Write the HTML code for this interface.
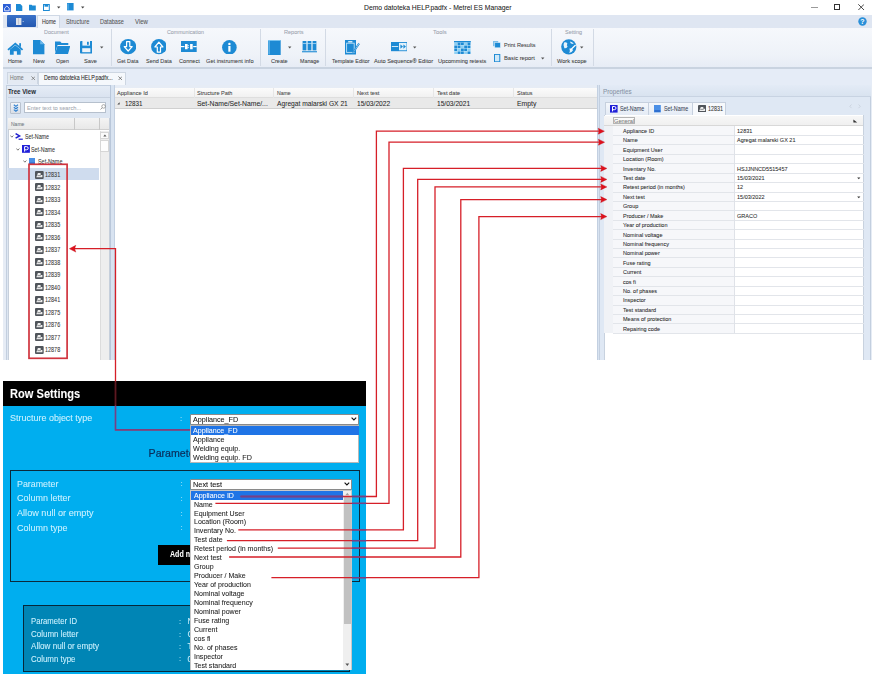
<!DOCTYPE html>
<html><head><meta charset="utf-8"><title>Metrel ES Manager</title>
<style>
html,body{margin:0;padding:0;}
body{width:875px;height:677px;overflow:hidden;position:relative;background:#fff;font-family:"Liberation Sans", sans-serif;}
#wrap{position:absolute;left:0;top:0;width:875px;height:677px;overflow:hidden;filter:blur(0.3px);}
#wrap>div,#wrap>svg,#wrap>span{position:absolute;box-sizing:border-box;}
.t{white-space:pre;transform-origin:0 0;-webkit-text-stroke:0.06px currentColor;}

</style></head><body><div id="wrap">
<div style="left:3.00px;top:14.50px;width:869.00px;height:345.50px;background:#e6ecf5;"></div>
<div style="left:0.00px;top:0.00px;width:875.00px;height:14.50px;background:#fff;"></div>
<svg style="left:3.00px;top:3.50px;" width="8.00" height="8.00" viewBox="0 0 8.00 8.00"><rect x="0" y="0" width="7.8" height="8" fill="#2b5fd6"/><path d="M1.6 4.2 L3.9 2 L6.2 4.2 V6.8 H1.6 Z" fill="none" stroke="#fff" stroke-width="0.8"/></svg>
<svg style="left:15.80px;top:3.80px;" width="7.00" height="7.50" viewBox="0 0 7.00 7.50"><path d="M0 0 H4.3 L6.3 2 V7.2 H0 Z" fill="#1d8ad4"/></svg>
<svg style="left:29.20px;top:3.90px;" width="7.50" height="7.00" viewBox="0 0 7.50 7.00"><path d="M0 0.8 H2.6 L3.3 1.6 H6.8 V6.6 H0 Z" fill="#1d8ad4"/></svg>
<svg style="left:43.00px;top:4.00px;" width="6.80" height="7.00" viewBox="0 0 6.80 7.00"><rect x="0.5" y="0.5" width="5.8" height="6" fill="none" stroke="#1d8ad4" stroke-width="1"/><rect x="1.5" y="0.5" width="3.8" height="2.2" fill="#1d8ad4"/></svg>
<svg style="left:56.50px;top:6.00px;" width="4.00" height="3.00" viewBox="0 0 4.00 3.00"><path d="M0 0.5 H3.4 L1.7 2.4 Z" fill="#444"/></svg>
<svg style="left:67.00px;top:3.40px;" width="7.00" height="7.60" viewBox="0 0 7.00 7.60"><rect x="0" y="0" width="6.6" height="7.4" fill="#1d8ad4"/><rect x="0.6" y="0.6" width="0.8" height="6.2" fill="#7cc3ef"/></svg>
<svg style="left:80.50px;top:6.00px;" width="4.00" height="3.00" viewBox="0 0 4.00 3.00"><path d="M0 0.5 H3.4 L1.7 2.4 Z" fill="#444"/></svg>
<span class="t" style="left:364.00px;top:4.00px;font-size:8.00px;line-height:8.00px;color:#202020;font-weight:400;font-family:'Liberation Sans', sans-serif;transform:scaleX(0.8469);">Demo datoteka HELP.padfx - Metrel ES Manager</span>
<div style="left:811.00px;top:6.60px;width:7.00px;height:0.90px;background:#9a9a9a;"></div>
<div style="left:834.00px;top:4.30px;width:5.80px;height:5.60px;border:0.9px solid #333;"></div>
<svg style="left:857.80px;top:4.00px;" width="6.40" height="6.40" viewBox="0 0 6.40 6.40"><path d="M0.3 0.3 L6.1 6.1 M6.1 0.3 L0.3 6.1" stroke="#333" stroke-width="0.9"/></svg>
<div style="left:3.00px;top:14.50px;width:869.00px;height:13.50px;background:#dfe6f2;"></div>
<div style="left:6.50px;top:15.00px;width:29.50px;height:11.70px;background:linear-gradient(#3a72c9,#2458b0);border-radius:1px;"></div>
<svg style="left:16.00px;top:17.80px;" width="12.00" height="7.50" viewBox="0 0 12.00 7.50"><rect x="0" y="0" width="5.4" height="7" fill="#dfe3ea"/><rect x="2.3" y="0" width="0.5" height="6.5" fill="#aab"/><path d="M6.5 3.5 H8" stroke="#cfd8ea" stroke-width="0.6"/></svg>
<div style="left:36.70px;top:15.20px;width:23.80px;height:13.50px;background:#f3f6fb;border:0.6px solid #cfd8e5;border-bottom:none;"></div>
<span class="t" style="left:41.60px;top:18.00px;font-size:7.00px;line-height:7.00px;color:#333;font-weight:400;font-family:'Liberation Sans', sans-serif;transform:scaleX(0.7498);">Home</span>
<span class="t" style="left:66.00px;top:18.00px;font-size:7.00px;line-height:7.00px;color:#555;font-weight:400;font-family:'Liberation Sans', sans-serif;transform:scaleX(0.8239);">Structure</span>
<span class="t" style="left:100.10px;top:18.00px;font-size:7.00px;line-height:7.00px;color:#555;font-weight:400;font-family:'Liberation Sans', sans-serif;transform:scaleX(0.7942);">Database</span>
<span class="t" style="left:134.80px;top:18.00px;font-size:7.00px;line-height:7.00px;color:#555;font-weight:400;font-family:'Liberation Sans', sans-serif;transform:scaleX(0.8573);">View</span>
<svg style="left:857.50px;top:16.80px;" width="9.00" height="9.00" viewBox="0 0 9.00 9.00"><circle cx="4.5" cy="4.5" r="4.2" fill="#2a8fd8"/><text x="4.5" y="7.2" font-size="7" font-weight="700" text-anchor="middle" fill="#fff" font-family="Liberation Sans">?</text></svg>
<div style="left:3.00px;top:28.00px;width:869.00px;height:40.00px;background:linear-gradient(#f6f8fc,#eef2f8 70%,#e6ecf5);"></div>
<div style="left:3.00px;top:67.00px;width:869.00px;height:2.00px;background:#c9d3e0;"></div>
<div style="left:110.50px;top:29.00px;width:0.80px;height:37.00px;background:#d3dae5;"></div>
<div style="left:259.50px;top:29.00px;width:0.80px;height:37.00px;background:#d3dae5;"></div>
<div style="left:325.00px;top:29.00px;width:0.80px;height:37.00px;background:#d3dae5;"></div>
<div style="left:551.20px;top:29.00px;width:0.80px;height:37.00px;background:#d3dae5;"></div>
<div style="left:592.80px;top:29.00px;width:0.80px;height:37.00px;background:#d3dae5;"></div>
<span class="t" style="left:44.10px;top:29.00px;font-size:6.20px;line-height:6.20px;color:#9aa2ae;font-weight:400;font-family:'Liberation Sans', sans-serif;transform:scaleX(0.8776);">Document</span>
<span class="t" style="left:167.00px;top:29.00px;font-size:6.20px;line-height:6.20px;color:#9aa2ae;font-weight:400;font-family:'Liberation Sans', sans-serif;transform:scaleX(0.8567);">Communication</span>
<span class="t" style="left:283.70px;top:29.00px;font-size:6.20px;line-height:6.20px;color:#9aa2ae;font-weight:400;font-family:'Liberation Sans', sans-serif;transform:scaleX(0.8982);">Reports</span>
<span class="t" style="left:432.60px;top:29.00px;font-size:6.20px;line-height:6.20px;color:#9aa2ae;font-weight:400;font-family:'Liberation Sans', sans-serif;transform:scaleX(0.9465);">Tools</span>
<span class="t" style="left:564.70px;top:29.00px;font-size:6.20px;line-height:6.20px;color:#9aa2ae;font-weight:400;font-family:'Liberation Sans', sans-serif;transform:scaleX(0.8859);">Setting</span>
<span class="t" style="left:8.00px;top:59.00px;font-size:5.90px;line-height:5.90px;color:#3c3c3c;font-weight:400;font-family:'Liberation Sans', sans-serif;transform:scaleX(0.9023);">Home</span>
<span class="t" style="left:32.90px;top:59.00px;font-size:5.90px;line-height:5.90px;color:#3c3c3c;font-weight:400;font-family:'Liberation Sans', sans-serif;transform:scaleX(0.9912);">New</span>
<span class="t" style="left:56.00px;top:59.00px;font-size:5.90px;line-height:5.90px;color:#3c3c3c;font-weight:400;font-family:'Liberation Sans', sans-serif;transform:scaleX(0.9007);">Open</span>
<span class="t" style="left:84.40px;top:59.00px;font-size:5.90px;line-height:5.90px;color:#3c3c3c;font-weight:400;font-family:'Liberation Sans', sans-serif;transform:scaleX(0.9667);">Save</span>
<span class="t" style="left:117.00px;top:59.00px;font-size:5.90px;line-height:5.90px;color:#3c3c3c;font-weight:400;font-family:'Liberation Sans', sans-serif;transform:scaleX(0.9063);">Get Data</span>
<span class="t" style="left:145.60px;top:59.00px;font-size:5.90px;line-height:5.90px;color:#3c3c3c;font-weight:400;font-family:'Liberation Sans', sans-serif;transform:scaleX(0.9289);">Send Data</span>
<span class="t" style="left:178.60px;top:59.00px;font-size:5.90px;line-height:5.90px;color:#3c3c3c;font-weight:400;font-family:'Liberation Sans', sans-serif;transform:scaleX(0.9465);">Connect</span>
<span class="t" style="left:205.80px;top:59.00px;font-size:5.90px;line-height:5.90px;color:#3c3c3c;font-weight:400;font-family:'Liberation Sans', sans-serif;transform:scaleX(0.9550);">Get instrument info</span>
<span class="t" style="left:270.90px;top:59.00px;font-size:5.90px;line-height:5.90px;color:#3c3c3c;font-weight:400;font-family:'Liberation Sans', sans-serif;transform:scaleX(0.9430);">Create</span>
<span class="t" style="left:299.70px;top:59.00px;font-size:5.90px;line-height:5.90px;color:#3c3c3c;font-weight:400;font-family:'Liberation Sans', sans-serif;transform:scaleX(0.9052);">Manage</span>
<span class="t" style="left:331.70px;top:59.00px;font-size:5.90px;line-height:5.90px;color:#3c3c3c;font-weight:400;font-family:'Liberation Sans', sans-serif;transform:scaleX(0.9148);">Template Editor</span>
<span class="t" style="left:374.00px;top:59.00px;font-size:5.90px;line-height:5.90px;color:#3c3c3c;font-weight:400;font-family:'Liberation Sans', sans-serif;transform:scaleX(0.9587);">Auto Sequence® Editor</span>
<span class="t" style="left:437.90px;top:59.00px;font-size:5.90px;line-height:5.90px;color:#3c3c3c;font-weight:400;font-family:'Liberation Sans', sans-serif;transform:scaleX(0.9523);">Upcomming retests</span>
<span class="t" style="left:503.70px;top:43.00px;font-size:5.90px;line-height:5.90px;color:#3c3c3c;font-weight:400;font-family:'Liberation Sans', sans-serif;transform:scaleX(0.9419);">Print Results</span>
<span class="t" style="left:503.70px;top:56.00px;font-size:5.90px;line-height:5.90px;color:#3c3c3c;font-weight:400;font-family:'Liberation Sans', sans-serif;transform:scaleX(0.9784);">Basic report</span>
<span class="t" style="left:557.40px;top:59.00px;font-size:5.90px;line-height:5.90px;color:#3c3c3c;font-weight:400;font-family:'Liberation Sans', sans-serif;transform:scaleX(0.9568);">Work scope</span>
<svg style="left:7.00px;top:41.50px;" width="17.00" height="13.50" viewBox="0 0 17.00 13.50"><path d="M8.3 0.6 L0.4 7.3 L1.6 8.4 L8.3 2.8 L15 8.4 L16.2 7.3 Z" fill="#1d8ad4"/><rect x="12.2" y="1.2" width="1.8" height="3.6" fill="#1d8ad4"/><path d="M2.9 7.6 L8.3 3.2 L13.7 7.6 V12.8 H9.9 V9.3 H6.7 V12.8 H2.9 Z" fill="#1d8ad4"/></svg>
<svg style="left:33.30px;top:40.00px;" width="11.50" height="14.50" viewBox="0 0 11.50 14.50"><path d="M0 0 H7.2 L11.4 4.3 V14.3 H0 Z" fill="#1d8ad4"/><path d="M7.2 0 V4.3 H11.4" fill="#6db8ea"/></svg>
<svg style="left:54.70px;top:40.60px;" width="15.50" height="13.20" viewBox="0 0 15.50 13.20"><path d="M0 0.6 H5.2 L6.6 2 H13.3 V4 H2.6 L0 12 Z" fill="#1d8ad4"/><path d="M2.4 4.9 H15.3 L13 13 H0 Z" fill="#1d8ad4"/></svg>
<svg style="left:79.60px;top:41.10px;" width="12.60" height="12.80" viewBox="0 0 12.60 12.80"><rect x="0" y="0" width="12.5" height="12.6" rx="1" fill="#1d8ad4"/><rect x="2.4" y="0" width="7.6" height="4.6" fill="#eef3f9"/><rect x="7" y="0.8" width="1.8" height="3" fill="#1d8ad4"/><rect x="2.2" y="7.2" width="8.2" height="4" fill="#eef3f9"/></svg>
<svg style="left:99.50px;top:46.00px;" width="4.00" height="3.00" viewBox="0 0 4.00 3.00"><path d="M0 0.4 H3.4 L1.7 2.4 Z" fill="#555"/></svg>
<svg style="left:119.50px;top:39.40px;" width="16.40" height="15.40" viewBox="0 0 16.40 15.40"><ellipse cx="8.2" cy="7.7" rx="8.1" ry="7.6" fill="#1d8ad4"/><path d="M6.6 2.6 H9.8 V7.6 H12.2 L8.2 12 L4.2 7.6 H6.6 Z" fill="none" stroke="#fff" stroke-width="1.2" stroke-linejoin="round"/></svg>
<svg style="left:150.60px;top:39.40px;" width="15.80" height="15.40" viewBox="0 0 15.80 15.40"><ellipse cx="7.9" cy="7.7" rx="7.8" ry="7.6" fill="#1d8ad4"/><path d="M6.3 13.2 V8 H3.9 L7.9 3.2 L11.9 8 H9.5 V13.2 Z" fill="none" stroke="#fff" stroke-width="1.2" stroke-linejoin="round"/></svg>
<svg style="left:181.10px;top:41.20px;" width="15.80" height="11.20" viewBox="0 0 15.80 11.20"><rect x="0" y="0" width="15.7" height="11.1" fill="#1d8ad4"/><rect x="0" y="5" width="3.5" height="1.2" fill="#fff"/><rect x="12.2" y="5" width="3.5" height="1.2" fill="#fff"/><path d="M4 3 H6.6 V8.2 H4 Z M11.7 3 H9.1 V8.2 H11.7 Z" fill="#fff"/><rect x="6.6" y="4.2" width="1.2" height="1" fill="#fff"/><rect x="6.6" y="6.1" width="1.2" height="1" fill="#fff"/></svg>
<svg style="left:222.20px;top:39.70px;" width="14.80" height="14.80" viewBox="0 0 14.80 14.80"><circle cx="7.4" cy="7.4" r="7.3" fill="#1d8ad4"/><circle cx="7.4" cy="3.9" r="1.2" fill="#fff"/><rect x="6.3" y="5.9" width="2.2" height="5.8" fill="#fff"/></svg>
<svg style="left:267.60px;top:39.50px;" width="13.00" height="15.20" viewBox="0 0 13.00 15.20"><rect x="0" y="0" width="12.7" height="15" fill="#1d8ad4"/><rect x="0.6" y="0.6" width="0.9" height="13.8" fill="#8fd0f5"/><rect x="0" y="0" width="12.7" height="0.8" fill="#8fd0f5"/></svg>
<svg style="left:288.20px;top:46.00px;" width="4.00" height="3.00" viewBox="0 0 4.00 3.00"><path d="M0 0.4 H3.4 L1.7 2.4 Z" fill="#555"/></svg>
<svg style="left:301.80px;top:41.30px;" width="15.20" height="11.50" viewBox="0 0 15.20 11.50"><rect x="0.6" y="0" width="3.8" height="9.4" fill="#1d8ad4"/><rect x="5.6" y="0" width="3.8" height="9.4" fill="#1d8ad4"/><rect x="10.6" y="0" width="3.8" height="9.4" fill="#1d8ad4"/><rect x="0.6" y="2" width="13.8" height="0.7" fill="#bfe3f8"/><rect x="0" y="10.2" width="15" height="1.1" fill="#1d8ad4"/></svg>
<svg style="left:344.80px;top:39.80px;" width="14.80" height="14.80" viewBox="0 0 14.80 14.80"><rect x="0" y="0" width="11" height="14.5" fill="#1d8ad4"/><rect x="3.2" y="1.2" width="4.2" height="1.2" fill="#fff"/><rect x="1.6" y="3.2" width="7.6" height="9.2" fill="none" stroke="#bfe2f7" stroke-width="0.9"/><path d="M14.4 4 L8.6 12.8 L7.6 13.8 L7.8 12.4 L13.4 3.4 Z" fill="#fff" stroke="#1d8ad4" stroke-width="0.9"/></svg>
<svg style="left:390.90px;top:42.20px;" width="16.60" height="9.40" viewBox="0 0 16.60 9.40"><rect x="0" y="0" width="16.4" height="9.2" fill="#1d8ad4"/><rect x="8" y="0.9" width="7.6" height="7.4" fill="#e3f2fb"/><path d="M9.4 2.4 L12 4.6 L9.4 6.8 Z M12.4 2.4 L15 4.6 L12.4 6.8 Z" fill="#1d8ad4"/><rect x="0.8" y="4.1" width="6.4" height="0.9" fill="#e3f2fb"/></svg>
<svg style="left:412.80px;top:46.00px;" width="4.00" height="3.00" viewBox="0 0 4.00 3.00"><path d="M0 0.4 H3.4 L1.7 2.4 Z" fill="#555"/></svg>
<svg style="left:453.60px;top:40.90px;" width="17.00" height="13.50" viewBox="0 0 17.00 13.50"><rect x="0" y="0" width="16.8" height="13.3" fill="#d3ecfa"/><rect x="0" y="0" width="16.8" height="1.4" fill="#1d8ad4"/><rect x="0.30" y="1.60" width="2.9" height="2.5" fill="#8ccff3"/><rect x="3.60" y="1.60" width="2.9" height="2.5" fill="#1d8ad4"/><rect x="6.90" y="1.60" width="2.9" height="2.5" fill="#1d8ad4"/><rect x="10.20" y="1.60" width="2.9" height="2.5" fill="#8ccff3"/><rect x="13.50" y="1.60" width="2.9" height="2.5" fill="#1d8ad4"/><rect x="0.30" y="4.55" width="2.9" height="2.5" fill="#1d8ad4"/><rect x="3.60" y="4.55" width="2.9" height="2.5" fill="#1d8ad4"/><rect x="6.90" y="4.55" width="2.9" height="2.5" fill="#8ccff3"/><rect x="10.20" y="4.55" width="2.9" height="2.5" fill="#1d8ad4"/><rect x="13.50" y="4.55" width="2.9" height="2.5" fill="#1d8ad4"/><rect x="0.30" y="7.50" width="2.9" height="2.5" fill="#1d8ad4"/><rect x="3.60" y="7.50" width="2.9" height="2.5" fill="#8ccff3"/><rect x="6.90" y="7.50" width="2.9" height="2.5" fill="#1d8ad4"/><rect x="10.20" y="7.50" width="2.9" height="2.5" fill="#1d8ad4"/><rect x="13.50" y="7.50" width="2.9" height="2.5" fill="#8ccff3"/><rect x="0.30" y="10.45" width="2.9" height="2.5" fill="#8ccff3"/><rect x="3.60" y="10.45" width="2.9" height="2.5" fill="#1d8ad4"/><rect x="6.90" y="10.45" width="2.9" height="2.5" fill="#1d8ad4"/><rect x="10.20" y="10.45" width="2.9" height="2.5" fill="#8ccff3"/><rect x="13.50" y="10.45" width="2.9" height="2.5" fill="#1d8ad4"/></svg>
<svg style="left:493.00px;top:40.80px;" width="8.00" height="7.00" viewBox="0 0 8.00 7.00"><rect x="0" y="0" width="5.2" height="5.2" fill="#7cbde8"/><rect x="1.8" y="1.6" width="5.6" height="5.2" fill="#1d8ad4" stroke="#e9f3fb" stroke-width="0.5"/></svg>
<svg style="left:493.90px;top:53.60px;" width="7.00" height="8.40" viewBox="0 0 7.00 8.40"><rect x="0" y="0" width="6.3" height="8.2" fill="#1d8ad4"/><rect x="1" y="0.9" width="4.3" height="6.4" fill="#cfe8f8"/></svg>
<svg style="left:540.60px;top:57.00px;" width="4.00" height="3.00" viewBox="0 0 4.00 3.00"><path d="M0 0.4 H3.4 L1.7 2.4 Z" fill="#555"/></svg>
<svg style="left:560.80px;top:39.20px;" width="16.00" height="16.00" viewBox="0 0 16.00 16.00"><circle cx="7.8" cy="7.8" r="7.6" fill="#1d8ad4"/><path d="M3 3.6 Q5 2.4 6.4 4.4 Q5.2 6.4 6.6 7.4 Q5.4 9.6 3.4 9.2 Q1.8 6.4 3 3.6 Z M9 2.4 Q11.6 2.6 12.8 5 Q10.6 5 9.6 4.2 Z M8.4 9.6 Q10.8 8.8 12.2 11 Q10.8 13.8 8.2 14 Q9.4 11.8 8.4 9.6 Z" fill="#e6f4fc"/><path d="M9.4 11 L14.6 6" stroke="#fff" stroke-width="1.2"/></svg>
<svg style="left:579.60px;top:46.00px;" width="4.00" height="3.00" viewBox="0 0 4.00 3.00"><path d="M0 0.4 H3.4 L1.7 2.4 Z" fill="#555"/></svg>
<div style="left:3.00px;top:69.00px;width:869.00px;height:16.00px;background:#e5ecf7;"></div>
<div style="left:6.80px;top:72.30px;width:31.60px;height:12.20px;background:#e4eaf3;border:0.7px solid #cdd6e2;border-bottom:none;"></div>
<span class="t" style="left:10.40px;top:75.00px;font-size:6.70px;line-height:6.70px;color:#777;font-weight:400;font-family:'Liberation Sans', sans-serif;transform:scaleX(0.7610);">Home</span>
<svg style="left:30.60px;top:75.90px;" width="4.60" height="4.60" viewBox="0 0 4.60 4.60"><path d="M0.4 0.4 L4.2 4.2 M4.2 0.4 L0.4 4.2" stroke="#666" stroke-width="0.7"/></svg>
<div style="left:38.40px;top:71.80px;width:87.20px;height:13.00px;background:#f5f8fc;border:0.7px solid #cdd6e2;border-bottom:none;"></div>
<span class="t" style="left:44.00px;top:75.00px;font-size:6.70px;line-height:6.70px;color:#1a1a1a;font-weight:400;font-family:'Liberation Sans', sans-serif;transform:scaleX(0.7838);">Demo datoteka HELP.padfx...</span>
<svg style="left:117.80px;top:75.90px;" width="4.60" height="4.60" viewBox="0 0 4.60 4.60"><path d="M0.4 0.4 L4.2 4.2 M4.2 0.4 L0.4 4.2" stroke="#555" stroke-width="0.7"/></svg>
<div style="left:5.60px;top:84.80px;width:109.00px;height:275.00px;background:#dde6f2;border:0.8px solid #c3cfdf;border-bottom:none;"></div>
<div style="left:6.50px;top:85.60px;width:107.40px;height:11.50px;background:linear-gradient(#e5ecf6,#dae3f0);"></div>
<span class="t" style="left:8.40px;top:89.00px;font-size:6.30px;line-height:6.30px;color:#2a2f38;font-weight:700;font-family:'Liberation Sans', sans-serif;transform:scaleX(0.9636);">Tree View</span>
<div style="left:8.00px;top:97.00px;width:102.00px;height:0.70px;background:#c8d2e0;"></div>
<div style="left:10.30px;top:102.40px;width:11.00px;height:11.20px;background:linear-gradient(#f2f4f7,#d9dee6);border:0.7px solid #b9c2cf;border-radius:1px;"></div>
<svg style="left:12.80px;top:104.30px;" width="6.00" height="8.00" viewBox="0 0 6.00 8.00"><path d="M0.8 0.8 L2.9 2.4 L5 0.8 M0.8 3.2 L2.9 4.8 L5 3.2 M0.8 5.6 L2.9 7.2 L5 5.6" stroke="#2d7fd0" stroke-width="1.1" fill="none"/></svg>
<div style="left:24.40px;top:102.40px;width:82.00px;height:10.60px;background:#fff;border:0.7px solid #b6c0cd;"></div>
<span class="t" style="left:26.70px;top:105.00px;font-size:6.20px;line-height:6.20px;color:#a4a9b2;font-weight:400;font-family:'Liberation Sans', sans-serif;transform:scaleX(0.9215);">Enter text to search...</span>
<svg style="left:99.60px;top:104.40px;" width="6.00" height="6.00" viewBox="0 0 6.00 6.00"><circle cx="3.6" cy="2.4" r="1.8" fill="none" stroke="#888" stroke-width="0.7"/><path d="M2.3 3.7 L0.5 5.5" stroke="#888" stroke-width="0.8"/></svg>
<div style="left:7.50px;top:117.50px;width:102.50px;height:242.50px;background:#fff;border:0.7px solid #c6cfdb;border-bottom:none;"></div>
<div style="left:8.20px;top:118.20px;width:101.10px;height:12.00px;background:linear-gradient(#f4f4f4,#e8e8e8);border-bottom:0.7px solid #cfcfcf;"></div>
<div style="left:73.60px;top:118.40px;width:0.70px;height:11.80px;background:#c8c8c8;"></div>
<div style="left:99.40px;top:118.40px;width:0.70px;height:11.80px;background:#c8c8c8;"></div>
<span class="t" style="left:10.70px;top:121.00px;font-size:6.20px;line-height:6.20px;color:#6f7680;font-weight:400;font-family:'Liberation Sans', sans-serif;transform:scaleX(0.8102);">Name</span>
<div style="left:99.60px;top:130.60px;width:9.80px;height:229.00px;background:#eeeeee;border-left:0.5px solid #dcdcdc;"></div>
<div style="left:100.40px;top:131.60px;width:8.20px;height:7.60px;background:#fbfbfb;border:0.6px solid #d6d6d6;"></div>
<svg style="left:102.60px;top:133.60px;" width="4.00" height="3.00" viewBox="0 0 4.00 3.00"><path d="M0.3 2.4 H3.5 L1.9 0.6 Z" fill="#555"/></svg>
<div style="left:100.40px;top:139.60px;width:8.20px;height:12.00px;background:#fdfdfd;border:0.6px solid #d6d6d6;"></div>
<div style="left:8.20px;top:168.00px;width:91.20px;height:12.20px;background:#cfdcee;"></div>
<svg style="left:9.80px;top:135.40px;" width="4.00" height="3.00" viewBox="0 0 4.00 3.00"><path d="M0.4 0.5 L1.9 2.2 L3.4 0.5" stroke="#444" stroke-width="0.7" fill="none"/></svg>
<svg style="left:15.00px;top:133.40px;" width="8.00" height="7.00" viewBox="0 0 8.00 7.00"><path d="M0.6 0.6 L4.6 2.9 L0.6 5.2" stroke="#1f1fcf" stroke-width="1.5" fill="none"/><rect x="3.6" y="5.6" width="4.2" height="1.2" fill="#1f1fcf"/></svg>
<span class="t" style="left:24.90px;top:134.00px;font-size:6.50px;line-height:6.50px;color:#333;font-weight:400;font-family:'Liberation Sans', sans-serif;transform:scaleX(0.8202);">Set-Name</span>
<svg style="left:16.40px;top:148.00px;" width="4.00" height="3.00" viewBox="0 0 4.00 3.00"><path d="M0.4 0.5 L1.9 2.2 L3.4 0.5" stroke="#444" stroke-width="0.7" fill="none"/></svg>
<svg style="left:21.90px;top:145.00px;" width="8.00" height="8.00" viewBox="0 0 8.00 8.00"><rect x="0" y="0" width="7.9" height="7.8" fill="#2020d8"/><path d="M2.6 6.6 V1.6 H4.6 Q6.2 1.6 6.2 3.2 Q6.2 4.8 4.6 4.8 H3" stroke="#fff" stroke-width="1" fill="none"/></svg>
<span class="t" style="left:31.40px;top:147.00px;font-size:6.50px;line-height:6.50px;color:#333;font-weight:400;font-family:'Liberation Sans', sans-serif;transform:scaleX(0.8202);">Set-Name</span>
<svg style="left:23.30px;top:160.30px;" width="4.00" height="3.00" viewBox="0 0 4.00 3.00"><path d="M0.4 0.5 L1.9 2.2 L3.4 0.5" stroke="#444" stroke-width="0.7" fill="none"/></svg>
<svg style="left:28.60px;top:157.60px;" width="6.60" height="7.00" viewBox="0 0 6.60 7.00"><rect x="0" y="0" width="6.4" height="6.6" fill="#4a8fe6"/><rect x="0.4" y="4.4" width="5.6" height="2" fill="#2f6fcf"/></svg>
<span class="t" style="left:37.50px;top:159.00px;font-size:6.50px;line-height:6.50px;color:#333;font-weight:400;font-family:'Liberation Sans', sans-serif;transform:scaleX(0.8339);">Set-Name</span>
<svg style="left:35.10px;top:170.70px;" width="8.80" height="8.00" viewBox="0 0 8.80 8.00"><rect x="0" y="0" width="8.7" height="8.0" rx="1.1" fill="#50555b"/><path d="M1.3 6.3 L2.2 3.9 L2.9 2.1 H5.6 V4.0 H7.4 V6.3 Z" fill="#eeeeee"/><path d="M2.4 4.6 H5.9" stroke="#50555b" stroke-width="0.6"/></svg>
<span class="t" style="left:45.00px;top:172.00px;font-size:6.80px;line-height:6.80px;color:#333;font-weight:400;font-family:'Liberation Sans', sans-serif;transform:scaleX(0.8038);">12831</span>
<svg style="left:35.10px;top:183.22px;" width="8.80" height="8.00" viewBox="0 0 8.80 8.00"><rect x="0" y="0" width="8.7" height="8.0" rx="1.1" fill="#50555b"/><path d="M1.3 6.3 L2.2 3.9 L2.9 2.1 H5.6 V4.0 H7.4 V6.3 Z" fill="#eeeeee"/><path d="M2.4 4.6 H5.9" stroke="#50555b" stroke-width="0.6"/></svg>
<span class="t" style="left:45.00px;top:185.00px;font-size:6.80px;line-height:6.80px;color:#333;font-weight:400;font-family:'Liberation Sans', sans-serif;transform:scaleX(0.8038);">12832</span>
<svg style="left:35.10px;top:195.74px;" width="8.80" height="8.00" viewBox="0 0 8.80 8.00"><rect x="0" y="0" width="8.7" height="8.0" rx="1.1" fill="#50555b"/><path d="M1.3 6.3 L2.2 3.9 L2.9 2.1 H5.6 V4.0 H7.4 V6.3 Z" fill="#eeeeee"/><path d="M2.4 4.6 H5.9" stroke="#50555b" stroke-width="0.6"/></svg>
<span class="t" style="left:45.00px;top:197.00px;font-size:6.80px;line-height:6.80px;color:#333;font-weight:400;font-family:'Liberation Sans', sans-serif;transform:scaleX(0.8038);">12833</span>
<svg style="left:35.10px;top:208.26px;" width="8.80" height="8.00" viewBox="0 0 8.80 8.00"><rect x="0" y="0" width="8.7" height="8.0" rx="1.1" fill="#50555b"/><path d="M1.3 6.3 L2.2 3.9 L2.9 2.1 H5.6 V4.0 H7.4 V6.3 Z" fill="#eeeeee"/><path d="M2.4 4.6 H5.9" stroke="#50555b" stroke-width="0.6"/></svg>
<span class="t" style="left:45.00px;top:210.00px;font-size:6.80px;line-height:6.80px;color:#333;font-weight:400;font-family:'Liberation Sans', sans-serif;transform:scaleX(0.8038);">12834</span>
<svg style="left:35.10px;top:220.78px;" width="8.80" height="8.00" viewBox="0 0 8.80 8.00"><rect x="0" y="0" width="8.7" height="8.0" rx="1.1" fill="#50555b"/><path d="M1.3 6.3 L2.2 3.9 L2.9 2.1 H5.6 V4.0 H7.4 V6.3 Z" fill="#eeeeee"/><path d="M2.4 4.6 H5.9" stroke="#50555b" stroke-width="0.6"/></svg>
<span class="t" style="left:45.00px;top:222.00px;font-size:6.80px;line-height:6.80px;color:#333;font-weight:400;font-family:'Liberation Sans', sans-serif;transform:scaleX(0.8038);">12835</span>
<svg style="left:35.10px;top:233.30px;" width="8.80" height="8.00" viewBox="0 0 8.80 8.00"><rect x="0" y="0" width="8.7" height="8.0" rx="1.1" fill="#50555b"/><path d="M1.3 6.3 L2.2 3.9 L2.9 2.1 H5.6 V4.0 H7.4 V6.3 Z" fill="#eeeeee"/><path d="M2.4 4.6 H5.9" stroke="#50555b" stroke-width="0.6"/></svg>
<span class="t" style="left:45.00px;top:235.00px;font-size:6.80px;line-height:6.80px;color:#333;font-weight:400;font-family:'Liberation Sans', sans-serif;transform:scaleX(0.8038);">12836</span>
<svg style="left:35.10px;top:245.82px;" width="8.80" height="8.00" viewBox="0 0 8.80 8.00"><rect x="0" y="0" width="8.7" height="8.0" rx="1.1" fill="#50555b"/><path d="M1.3 6.3 L2.2 3.9 L2.9 2.1 H5.6 V4.0 H7.4 V6.3 Z" fill="#eeeeee"/><path d="M2.4 4.6 H5.9" stroke="#50555b" stroke-width="0.6"/></svg>
<span class="t" style="left:45.00px;top:247.00px;font-size:6.80px;line-height:6.80px;color:#333;font-weight:400;font-family:'Liberation Sans', sans-serif;transform:scaleX(0.8038);">12837</span>
<svg style="left:35.10px;top:258.34px;" width="8.80" height="8.00" viewBox="0 0 8.80 8.00"><rect x="0" y="0" width="8.7" height="8.0" rx="1.1" fill="#50555b"/><path d="M1.3 6.3 L2.2 3.9 L2.9 2.1 H5.6 V4.0 H7.4 V6.3 Z" fill="#eeeeee"/><path d="M2.4 4.6 H5.9" stroke="#50555b" stroke-width="0.6"/></svg>
<span class="t" style="left:45.00px;top:260.00px;font-size:6.80px;line-height:6.80px;color:#333;font-weight:400;font-family:'Liberation Sans', sans-serif;transform:scaleX(0.8038);">12838</span>
<svg style="left:35.10px;top:270.86px;" width="8.80" height="8.00" viewBox="0 0 8.80 8.00"><rect x="0" y="0" width="8.7" height="8.0" rx="1.1" fill="#50555b"/><path d="M1.3 6.3 L2.2 3.9 L2.9 2.1 H5.6 V4.0 H7.4 V6.3 Z" fill="#eeeeee"/><path d="M2.4 4.6 H5.9" stroke="#50555b" stroke-width="0.6"/></svg>
<span class="t" style="left:45.00px;top:272.00px;font-size:6.80px;line-height:6.80px;color:#333;font-weight:400;font-family:'Liberation Sans', sans-serif;transform:scaleX(0.8038);">12839</span>
<svg style="left:35.10px;top:283.38px;" width="8.80" height="8.00" viewBox="0 0 8.80 8.00"><rect x="0" y="0" width="8.7" height="8.0" rx="1.1" fill="#50555b"/><path d="M1.3 6.3 L2.2 3.9 L2.9 2.1 H5.6 V4.0 H7.4 V6.3 Z" fill="#eeeeee"/><path d="M2.4 4.6 H5.9" stroke="#50555b" stroke-width="0.6"/></svg>
<span class="t" style="left:45.00px;top:285.00px;font-size:6.80px;line-height:6.80px;color:#333;font-weight:400;font-family:'Liberation Sans', sans-serif;transform:scaleX(0.8038);">12840</span>
<svg style="left:35.10px;top:295.90px;" width="8.80" height="8.00" viewBox="0 0 8.80 8.00"><rect x="0" y="0" width="8.7" height="8.0" rx="1.1" fill="#50555b"/><path d="M1.3 6.3 L2.2 3.9 L2.9 2.1 H5.6 V4.0 H7.4 V6.3 Z" fill="#eeeeee"/><path d="M2.4 4.6 H5.9" stroke="#50555b" stroke-width="0.6"/></svg>
<span class="t" style="left:45.00px;top:297.00px;font-size:6.80px;line-height:6.80px;color:#333;font-weight:400;font-family:'Liberation Sans', sans-serif;transform:scaleX(0.8038);">12841</span>
<svg style="left:35.10px;top:308.42px;" width="8.80" height="8.00" viewBox="0 0 8.80 8.00"><rect x="0" y="0" width="8.7" height="8.0" rx="1.1" fill="#50555b"/><path d="M1.3 6.3 L2.2 3.9 L2.9 2.1 H5.6 V4.0 H7.4 V6.3 Z" fill="#eeeeee"/><path d="M2.4 4.6 H5.9" stroke="#50555b" stroke-width="0.6"/></svg>
<span class="t" style="left:45.00px;top:310.00px;font-size:6.80px;line-height:6.80px;color:#333;font-weight:400;font-family:'Liberation Sans', sans-serif;transform:scaleX(0.8038);">12875</span>
<svg style="left:35.10px;top:320.94px;" width="8.80" height="8.00" viewBox="0 0 8.80 8.00"><rect x="0" y="0" width="8.7" height="8.0" rx="1.1" fill="#50555b"/><path d="M1.3 6.3 L2.2 3.9 L2.9 2.1 H5.6 V4.0 H7.4 V6.3 Z" fill="#eeeeee"/><path d="M2.4 4.6 H5.9" stroke="#50555b" stroke-width="0.6"/></svg>
<span class="t" style="left:45.00px;top:322.00px;font-size:6.80px;line-height:6.80px;color:#333;font-weight:400;font-family:'Liberation Sans', sans-serif;transform:scaleX(0.8038);">12876</span>
<svg style="left:35.10px;top:333.46px;" width="8.80" height="8.00" viewBox="0 0 8.80 8.00"><rect x="0" y="0" width="8.7" height="8.0" rx="1.1" fill="#50555b"/><path d="M1.3 6.3 L2.2 3.9 L2.9 2.1 H5.6 V4.0 H7.4 V6.3 Z" fill="#eeeeee"/><path d="M2.4 4.6 H5.9" stroke="#50555b" stroke-width="0.6"/></svg>
<span class="t" style="left:45.00px;top:335.00px;font-size:6.80px;line-height:6.80px;color:#333;font-weight:400;font-family:'Liberation Sans', sans-serif;transform:scaleX(0.8038);">12877</span>
<svg style="left:35.10px;top:345.98px;" width="8.80" height="8.00" viewBox="0 0 8.80 8.00"><rect x="0" y="0" width="8.7" height="8.0" rx="1.1" fill="#50555b"/><path d="M1.3 6.3 L2.2 3.9 L2.9 2.1 H5.6 V4.0 H7.4 V6.3 Z" fill="#eeeeee"/><path d="M2.4 4.6 H5.9" stroke="#50555b" stroke-width="0.6"/></svg>
<span class="t" style="left:45.00px;top:347.00px;font-size:6.80px;line-height:6.80px;color:#333;font-weight:400;font-family:'Liberation Sans', sans-serif;transform:scaleX(0.8038);">12878</span>
<div style="left:109.60px;top:85.00px;width:5.20px;height:275.00px;background:#d8e3f1;border-left:0.7px solid #b9c7da;border-right:0.7px solid #c3d0e1;"></div>
<div style="left:114.60px;top:87.60px;width:482.40px;height:273.40px;background:#fff;"></div>
<div style="left:114.60px;top:87.60px;width:482.40px;height:10.00px;background:linear-gradient(#fbfbfb,#f1f1f1);border-bottom:0.6px solid #dedede;"></div>
<div style="left:114.60px;top:97.60px;width:482.40px;height:11.00px;background:#e9e9e9;border-bottom:0.7px solid #d0d0d0;"></div>
<div style="left:194.30px;top:88.00px;width:0.60px;height:9.60px;background:#e6e6e6;"></div>
<div style="left:273.40px;top:88.00px;width:0.60px;height:9.60px;background:#e6e6e6;"></div>
<div style="left:353.40px;top:88.00px;width:0.60px;height:9.60px;background:#e6e6e6;"></div>
<div style="left:433.40px;top:88.00px;width:0.60px;height:9.60px;background:#e6e6e6;"></div>
<div style="left:513.40px;top:88.00px;width:0.60px;height:9.60px;background:#e6e6e6;"></div>
<span class="t" style="left:117.10px;top:91.00px;font-size:5.80px;line-height:5.80px;color:#444;font-weight:400;font-family:'Liberation Sans', sans-serif;transform:scaleX(0.9680);">Appliance Id</span>
<span class="t" style="left:196.90px;top:91.00px;font-size:5.80px;line-height:5.80px;color:#444;font-weight:400;font-family:'Liberation Sans', sans-serif;transform:scaleX(0.9548);">Structure Path</span>
<span class="t" style="left:276.90px;top:91.00px;font-size:5.80px;line-height:5.80px;color:#444;font-weight:400;font-family:'Liberation Sans', sans-serif;transform:scaleX(0.8855);">Name</span>
<span class="t" style="left:356.90px;top:91.00px;font-size:5.80px;line-height:5.80px;color:#444;font-weight:400;font-family:'Liberation Sans', sans-serif;transform:scaleX(0.9787);">Next test</span>
<span class="t" style="left:436.60px;top:91.00px;font-size:5.80px;line-height:5.80px;color:#444;font-weight:400;font-family:'Liberation Sans', sans-serif;transform:scaleX(0.9899);">Test date</span>
<span class="t" style="left:516.60px;top:91.00px;font-size:5.80px;line-height:5.80px;color:#444;font-weight:400;font-family:'Liberation Sans', sans-serif;transform:scaleX(0.9427);">Status</span>
<svg style="left:116.80px;top:102.40px;" width="3.00" height="3.00" viewBox="0 0 3.00 3.00"><path d="M0.3 2.6 L2.6 0.3 L2.6 2.6 Z" fill="#444"/></svg>
<span class="t" style="left:124.90px;top:100.00px;font-size:7.50px;line-height:7.50px;color:#2a2a2a;font-weight:400;font-family:'Liberation Sans', sans-serif;transform:scaleX(0.8343);">12831</span>
<span class="t" style="left:196.90px;top:100.00px;font-size:7.50px;line-height:7.50px;color:#2a2a2a;font-weight:400;font-family:'Liberation Sans', sans-serif;transform:scaleX(0.9084);">Set-Name/Set-Name/...</span>
<span class="t" style="left:276.90px;top:100.00px;font-size:7.50px;line-height:7.50px;color:#2a2a2a;font-weight:400;font-family:'Liberation Sans', sans-serif;transform:scaleX(0.8892);">Agregat malarski GX 21</span>
<span class="t" style="left:356.90px;top:100.00px;font-size:7.50px;line-height:7.50px;color:#2a2a2a;font-weight:400;font-family:'Liberation Sans', sans-serif;transform:scaleX(0.8818);">15/03/2022</span>
<span class="t" style="left:436.60px;top:100.00px;font-size:7.50px;line-height:7.50px;color:#2a2a2a;font-weight:400;font-family:'Liberation Sans', sans-serif;transform:scaleX(0.8818);">15/03/2021</span>
<span class="t" style="left:516.60px;top:100.00px;font-size:7.50px;line-height:7.50px;color:#2a2a2a;font-weight:400;font-family:'Liberation Sans', sans-serif;transform:scaleX(0.9127);">Empty</span>
<div style="left:597.00px;top:85.00px;width:6.50px;height:275.00px;background:#d8e3f1;border-left:0.7px solid #c3d0e1;border-right:0.7px solid #b9c7da;"></div>
<div style="left:599.40px;top:84.60px;width:272.00px;height:275.40px;background:#dfe8f4;border:0.8px solid #c3cfdf;border-bottom:none;"></div>
<div style="left:600.20px;top:85.40px;width:270.40px;height:12.00px;background:linear-gradient(#e3ebf6,#d9e3f0);border-bottom:0.7px solid #c8d3e2;"></div>
<span class="t" style="left:602.90px;top:89.00px;font-size:6.50px;line-height:6.50px;color:#8793a5;font-weight:400;font-family:'Liberation Sans', sans-serif;transform:scaleX(0.9654);">Properties</span>
<div style="left:605.40px;top:102.30px;width:43.80px;height:13.20px;background:linear-gradient(#f4f7fb,#e4ebf5);border:0.7px solid #c6d0de;border-bottom:none;"></div>
<svg style="left:609.60px;top:104.50px;" width="8.00" height="8.00" viewBox="0 0 8.00 8.00"><rect x="0" y="0" width="7.6" height="7.6" fill="#2020d8"/><path d="M2.5 6.4 V1.5 H4.4 Q6 1.5 6 3.1 Q6 4.7 4.4 4.7 H2.9" stroke="#fff" stroke-width="1" fill="none"/></svg>
<span class="t" style="left:620.00px;top:106.00px;font-size:6.40px;line-height:6.40px;color:#3a4456;font-weight:400;font-family:'Liberation Sans', sans-serif;transform:scaleX(0.8400);">Set-Name</span>
<div style="left:649.20px;top:102.30px;width:43.70px;height:13.20px;background:linear-gradient(#f4f7fb,#e4ebf5);border:0.7px solid #c6d0de;border-bottom:none;border-left:none;"></div>
<svg style="left:653.80px;top:104.50px;" width="7.00" height="8.00" viewBox="0 0 7.00 8.00"><rect x="0" y="0" width="6.8" height="7.4" fill="#4a8fe6"/><rect x="0.5" y="5" width="5.8" height="2" fill="#2f6fcf"/></svg>
<span class="t" style="left:664.00px;top:106.00px;font-size:6.40px;line-height:6.40px;color:#3a4456;font-weight:400;font-family:'Liberation Sans', sans-serif;transform:scaleX(0.8400);">Set-Name</span>
<div style="left:692.90px;top:102.30px;width:33.50px;height:13.20px;background:#f7f9fc;border:0.7px solid #c6d0de;border-bottom:none;border-left:none;"></div>
<svg style="left:697.60px;top:104.60px;" width="8.40" height="7.80" viewBox="0 0 8.40 7.80"><rect x="0" y="0" width="8.3" height="7.6" rx="1.1" fill="#50555b"/><path d="M1.2 6.0 L2.1 3.7 L2.8 2.0 H5.3 V3.8 H7.1 V6.0 Z" fill="#eeeeee"/><path d="M2.3 4.4 H5.6" stroke="#50555b" stroke-width="0.6"/></svg>
<span class="t" style="left:708.40px;top:106.00px;font-size:6.40px;line-height:6.40px;color:#333;font-weight:400;font-family:'Liberation Sans', sans-serif;transform:scaleX(0.8428);">12831</span>
<svg style="left:848.50px;top:104.00px;" width="14.00" height="5.00" viewBox="0 0 14.00 5.00"><path d="M2.5 0.5 L0.8 2.3 L2.5 4.1 M9.6 0.5 L11.3 2.3 L9.6 4.1" stroke="#c0c8d4" stroke-width="0.6" fill="none"/></svg>
<div style="left:603.80px;top:115.30px;width:260.00px;height:244.70px;background:#fff;border-left:0.7px solid #c8d2df;border-right:0.7px solid #c8d2df;"></div>
<div style="left:604.40px;top:115.60px;width:259.00px;height:10.60px;background:linear-gradient(#f7f7f7,#f0f0f0);border-bottom:0.7px solid #d8d8d8;"></div>
<div style="left:613.30px;top:117.00px;width:22.00px;height:7.40px;border:0.6px solid #b4b4b4;background:#fbfbfb;"></div>
<span class="t" style="left:614.20px;top:119.00px;font-size:5.80px;line-height:5.80px;color:#777;font-weight:400;font-family:'Liberation Sans', sans-serif;transform:scaleX(0.9789);">General</span>
<svg style="left:852.80px;top:119.20px;" width="5.00" height="4.00" viewBox="0 0 5.00 4.00"><path d="M0.4 0.4 L4.2 3.6 H0.4 Z" fill="#333"/></svg>
<div style="left:604.40px;top:126.20px;width:8.80px;height:207.30px;background:#f0f2f6;"></div>
<div style="left:613.20px;top:126.20px;width:120.60px;height:207.30px;background:#f6f7fa;"></div>
<div style="left:613.20px;top:135.02px;width:250.60px;height:0.60px;background:#e2e5ea;"></div>
<span class="t" style="left:622.70px;top:129.00px;font-size:5.80px;line-height:5.80px;color:#2a2a2a;font-weight:400;font-family:'Liberation Sans', sans-serif;transform:scaleX(0.9500);">Appliance ID</span>
<span class="t" style="left:737.00px;top:129.00px;font-size:5.80px;line-height:5.80px;color:#2a2a2a;font-weight:400;font-family:'Liberation Sans', sans-serif;transform:scaleX(0.9500);">12831</span>
<div style="left:613.20px;top:144.44px;width:250.60px;height:0.60px;background:#e2e5ea;"></div>
<span class="t" style="left:622.70px;top:138.00px;font-size:5.80px;line-height:5.80px;color:#2a2a2a;font-weight:400;font-family:'Liberation Sans', sans-serif;transform:scaleX(0.9500);">Name</span>
<span class="t" style="left:737.00px;top:138.00px;font-size:5.80px;line-height:5.80px;color:#2a2a2a;font-weight:400;font-family:'Liberation Sans', sans-serif;transform:scaleX(0.9500);">Agregat malarski GX 21</span>
<div style="left:613.20px;top:153.86px;width:250.60px;height:0.60px;background:#e2e5ea;"></div>
<span class="t" style="left:622.70px;top:148.00px;font-size:5.80px;line-height:5.80px;color:#2a2a2a;font-weight:400;font-family:'Liberation Sans', sans-serif;transform:scaleX(0.9500);">Equipment User</span>
<div style="left:613.20px;top:163.28px;width:250.60px;height:0.60px;background:#e2e5ea;"></div>
<span class="t" style="left:622.70px;top:157.00px;font-size:5.80px;line-height:5.80px;color:#2a2a2a;font-weight:400;font-family:'Liberation Sans', sans-serif;transform:scaleX(0.9500);">Location (Room)</span>
<div style="left:613.20px;top:172.70px;width:250.60px;height:0.60px;background:#e2e5ea;"></div>
<span class="t" style="left:622.70px;top:167.00px;font-size:5.80px;line-height:5.80px;color:#2a2a2a;font-weight:400;font-family:'Liberation Sans', sans-serif;transform:scaleX(0.9500);">Inventary No.</span>
<span class="t" style="left:737.00px;top:167.00px;font-size:5.80px;line-height:5.80px;color:#2a2a2a;font-weight:400;font-family:'Liberation Sans', sans-serif;transform:scaleX(0.9500);">HSJJNNCD5515457</span>
<div style="left:613.20px;top:182.12px;width:250.60px;height:0.60px;background:#e2e5ea;"></div>
<span class="t" style="left:622.70px;top:176.00px;font-size:5.80px;line-height:5.80px;color:#2a2a2a;font-weight:400;font-family:'Liberation Sans', sans-serif;transform:scaleX(0.9500);">Test date</span>
<span class="t" style="left:737.00px;top:176.00px;font-size:5.80px;line-height:5.80px;color:#2a2a2a;font-weight:400;font-family:'Liberation Sans', sans-serif;transform:scaleX(0.9500);">15/03/2021</span>
<div style="left:613.20px;top:191.54px;width:250.60px;height:0.60px;background:#e2e5ea;"></div>
<span class="t" style="left:622.70px;top:185.00px;font-size:5.80px;line-height:5.80px;color:#2a2a2a;font-weight:400;font-family:'Liberation Sans', sans-serif;transform:scaleX(0.9500);">Retest period (in months)</span>
<span class="t" style="left:737.00px;top:185.00px;font-size:5.80px;line-height:5.80px;color:#2a2a2a;font-weight:400;font-family:'Liberation Sans', sans-serif;transform:scaleX(0.9500);">12</span>
<div style="left:613.20px;top:200.96px;width:250.60px;height:0.60px;background:#e2e5ea;"></div>
<span class="t" style="left:622.70px;top:195.00px;font-size:5.80px;line-height:5.80px;color:#2a2a2a;font-weight:400;font-family:'Liberation Sans', sans-serif;transform:scaleX(0.9500);">Next test</span>
<span class="t" style="left:737.00px;top:195.00px;font-size:5.80px;line-height:5.80px;color:#2a2a2a;font-weight:400;font-family:'Liberation Sans', sans-serif;transform:scaleX(0.9500);">15/03/2022</span>
<div style="left:613.20px;top:210.38px;width:250.60px;height:0.60px;background:#e2e5ea;"></div>
<span class="t" style="left:622.70px;top:204.00px;font-size:5.80px;line-height:5.80px;color:#2a2a2a;font-weight:400;font-family:'Liberation Sans', sans-serif;transform:scaleX(0.9500);">Group</span>
<div style="left:613.20px;top:219.80px;width:250.60px;height:0.60px;background:#e2e5ea;"></div>
<span class="t" style="left:622.70px;top:214.00px;font-size:5.80px;line-height:5.80px;color:#2a2a2a;font-weight:400;font-family:'Liberation Sans', sans-serif;transform:scaleX(0.9500);">Producer / Make</span>
<span class="t" style="left:737.00px;top:214.00px;font-size:5.80px;line-height:5.80px;color:#2a2a2a;font-weight:400;font-family:'Liberation Sans', sans-serif;transform:scaleX(0.9500);">GRACO</span>
<div style="left:613.20px;top:229.22px;width:250.60px;height:0.60px;background:#e2e5ea;"></div>
<span class="t" style="left:622.70px;top:223.00px;font-size:5.80px;line-height:5.80px;color:#2a2a2a;font-weight:400;font-family:'Liberation Sans', sans-serif;transform:scaleX(0.9500);">Year of production</span>
<div style="left:613.20px;top:238.64px;width:250.60px;height:0.60px;background:#e2e5ea;"></div>
<span class="t" style="left:622.70px;top:233.00px;font-size:5.80px;line-height:5.80px;color:#2a2a2a;font-weight:400;font-family:'Liberation Sans', sans-serif;transform:scaleX(0.9500);">Nominal voltage</span>
<div style="left:613.20px;top:248.06px;width:250.60px;height:0.60px;background:#e2e5ea;"></div>
<span class="t" style="left:622.70px;top:242.00px;font-size:5.80px;line-height:5.80px;color:#2a2a2a;font-weight:400;font-family:'Liberation Sans', sans-serif;transform:scaleX(0.9500);">Nominal frequency</span>
<div style="left:613.20px;top:257.48px;width:250.60px;height:0.60px;background:#e2e5ea;"></div>
<span class="t" style="left:622.70px;top:251.00px;font-size:5.80px;line-height:5.80px;color:#2a2a2a;font-weight:400;font-family:'Liberation Sans', sans-serif;transform:scaleX(0.9500);">Nominal power</span>
<div style="left:613.20px;top:266.90px;width:250.60px;height:0.60px;background:#e2e5ea;"></div>
<span class="t" style="left:622.70px;top:261.00px;font-size:5.80px;line-height:5.80px;color:#2a2a2a;font-weight:400;font-family:'Liberation Sans', sans-serif;transform:scaleX(0.9500);">Fuse rating</span>
<div style="left:613.20px;top:276.32px;width:250.60px;height:0.60px;background:#e2e5ea;"></div>
<span class="t" style="left:622.70px;top:270.00px;font-size:5.80px;line-height:5.80px;color:#2a2a2a;font-weight:400;font-family:'Liberation Sans', sans-serif;transform:scaleX(0.9500);">Current</span>
<div style="left:613.20px;top:285.74px;width:250.60px;height:0.60px;background:#e2e5ea;"></div>
<span class="t" style="left:622.70px;top:280.00px;font-size:5.80px;line-height:5.80px;color:#2a2a2a;font-weight:400;font-family:'Liberation Sans', sans-serif;transform:scaleX(0.9500);">cos fi</span>
<div style="left:613.20px;top:295.16px;width:250.60px;height:0.60px;background:#e2e5ea;"></div>
<span class="t" style="left:622.70px;top:289.00px;font-size:5.80px;line-height:5.80px;color:#2a2a2a;font-weight:400;font-family:'Liberation Sans', sans-serif;transform:scaleX(0.9500);">No. of phases</span>
<div style="left:613.20px;top:304.58px;width:250.60px;height:0.60px;background:#e2e5ea;"></div>
<span class="t" style="left:622.70px;top:298.00px;font-size:5.80px;line-height:5.80px;color:#2a2a2a;font-weight:400;font-family:'Liberation Sans', sans-serif;transform:scaleX(0.9500);">Inspector</span>
<div style="left:613.20px;top:314.00px;width:250.60px;height:0.60px;background:#e2e5ea;"></div>
<span class="t" style="left:622.70px;top:308.00px;font-size:5.80px;line-height:5.80px;color:#2a2a2a;font-weight:400;font-family:'Liberation Sans', sans-serif;transform:scaleX(0.9500);">Test standard</span>
<div style="left:613.20px;top:323.42px;width:250.60px;height:0.60px;background:#e2e5ea;"></div>
<span class="t" style="left:622.70px;top:317.00px;font-size:5.80px;line-height:5.80px;color:#2a2a2a;font-weight:400;font-family:'Liberation Sans', sans-serif;transform:scaleX(0.9500);">Means of protection</span>
<div style="left:613.20px;top:332.84px;width:250.60px;height:0.60px;background:#e2e5ea;"></div>
<span class="t" style="left:622.70px;top:327.00px;font-size:5.80px;line-height:5.80px;color:#2a2a2a;font-weight:400;font-family:'Liberation Sans', sans-serif;transform:scaleX(0.9500);">Repairing code</span>
<div style="left:733.60px;top:126.20px;width:0.60px;height:207.30px;background:#dfe2e8;"></div>
<svg style="left:856.80px;top:176.80px;" width="4.00" height="3.00" viewBox="0 0 4.00 3.00"><path d="M0.2 0.4 H3.4 L1.8 2.2 Z" fill="#333"/></svg>
<svg style="left:856.80px;top:195.80px;" width="4.00" height="3.00" viewBox="0 0 4.00 3.00"><path d="M0.2 0.4 H3.4 L1.8 2.2 Z" fill="#333"/></svg>
<div style="left:3.40px;top:381.40px;width:362.90px;height:24.20px;background:#000;"></div>
<span class="t" style="left:10.30px;top:388.00px;font-size:12.30px;line-height:12.30px;color:#fff;font-weight:700;font-family:'Liberation Sans', sans-serif;transform:scaleX(0.9024);">Row Settings</span>
<div style="left:3.40px;top:405.50px;width:362.90px;height:268.20px;background:#00aeef;"></div>
<span class="t" style="left:9.80px;top:414.00px;font-size:9.00px;line-height:9.00px;color:#cdf2ff;font-weight:400;font-family:'Liberation Sans', sans-serif;transform:scaleX(0.9971);">Structure object type</span>
<span class="t" style="left:180.00px;top:415.00px;font-size:8.00px;line-height:8.00px;color:#bfe9fb;font-weight:400;font-family:'Liberation Sans', sans-serif;">:</span>
<span class="t" style="left:148.60px;top:448.00px;font-size:10.60px;line-height:10.60px;color:#0a2d5a;font-weight:400;font-family:'Liberation Sans', sans-serif;transform:scaleX(1.0000);-webkit-text-stroke:0.2px #0a2d5a;">Parameters</span>
<div style="left:10.30px;top:470.30px;width:349.60px;height:112.00px;border:1px solid #0a2a3c;"></div>
<span class="t" style="left:16.80px;top:480.00px;font-size:9.20px;line-height:9.20px;color:#cdf2ff;font-weight:400;font-family:'Liberation Sans', sans-serif;transform:scaleX(0.9639);">Parameter</span>
<span class="t" style="left:180.40px;top:480.00px;font-size:8.00px;line-height:8.00px;color:#bfe9fb;font-weight:400;font-family:'Liberation Sans', sans-serif;">:</span>
<span class="t" style="left:16.80px;top:494.00px;font-size:9.20px;line-height:9.20px;color:#cdf2ff;font-weight:400;font-family:'Liberation Sans', sans-serif;transform:scaleX(0.9779);">Column letter</span>
<span class="t" style="left:180.40px;top:495.00px;font-size:8.00px;line-height:8.00px;color:#bfe9fb;font-weight:400;font-family:'Liberation Sans', sans-serif;">:</span>
<span class="t" style="left:16.80px;top:509.00px;font-size:9.20px;line-height:9.20px;color:#cdf2ff;font-weight:400;font-family:'Liberation Sans', sans-serif;transform:scaleX(0.9921);">Allow null or empty</span>
<span class="t" style="left:180.40px;top:510.00px;font-size:8.00px;line-height:8.00px;color:#bfe9fb;font-weight:400;font-family:'Liberation Sans', sans-serif;">:</span>
<span class="t" style="left:16.80px;top:524.00px;font-size:9.20px;line-height:9.20px;color:#cdf2ff;font-weight:400;font-family:'Liberation Sans', sans-serif;transform:scaleX(0.9778);">Column type</span>
<span class="t" style="left:180.40px;top:524.00px;font-size:8.00px;line-height:8.00px;color:#bfe9fb;font-weight:400;font-family:'Liberation Sans', sans-serif;">:</span>
<div style="left:158.00px;top:545.00px;width:60.00px;height:19.70px;background:#000;"></div>
<span class="t" style="left:170.30px;top:550.00px;font-size:8.40px;line-height:8.40px;color:#fff;font-weight:700;font-family:'Liberation Sans', sans-serif;transform:scaleX(0.8400);">Add new</span>
<div style="left:22.90px;top:605.00px;width:327.50px;height:66.50px;background:#0085b5;border:1px solid #06283a;"></div>
<span class="t" style="left:30.90px;top:617.00px;font-size:8.40px;line-height:8.40px;color:#cdf2ff;font-weight:400;font-family:'Liberation Sans', sans-serif;transform:scaleX(0.9249);">Parameter ID</span>
<span class="t" style="left:179.00px;top:618.00px;font-size:7.50px;line-height:7.50px;color:#bfe9fb;font-weight:400;font-family:'Liberation Sans', sans-serif;">:</span>
<span class="t" style="left:187.40px;top:618.00px;font-size:8.20px;line-height:8.20px;color:#cdf2ff;font-weight:400;font-family:'Liberation Sans', sans-serif;">N</span>
<span class="t" style="left:30.90px;top:630.00px;font-size:8.40px;line-height:8.40px;color:#cdf2ff;font-weight:400;font-family:'Liberation Sans', sans-serif;transform:scaleX(0.9509);">Column letter</span>
<span class="t" style="left:179.00px;top:631.00px;font-size:7.50px;line-height:7.50px;color:#bfe9fb;font-weight:400;font-family:'Liberation Sans', sans-serif;">:</span>
<span class="t" style="left:187.40px;top:631.00px;font-size:8.20px;line-height:8.20px;color:#cdf2ff;font-weight:400;font-family:'Liberation Sans', sans-serif;">C</span>
<span class="t" style="left:30.90px;top:642.00px;font-size:8.40px;line-height:8.40px;color:#cdf2ff;font-weight:400;font-family:'Liberation Sans', sans-serif;transform:scaleX(0.9689);">Allow null or empty</span>
<span class="t" style="left:179.00px;top:643.00px;font-size:7.50px;line-height:7.50px;color:#bfe9fb;font-weight:400;font-family:'Liberation Sans', sans-serif;">:</span>
<span class="t" style="left:187.40px;top:643.00px;font-size:8.20px;line-height:8.20px;color:#cdf2ff;font-weight:400;font-family:'Liberation Sans', sans-serif;">T</span>
<span class="t" style="left:30.90px;top:655.00px;font-size:8.40px;line-height:8.40px;color:#cdf2ff;font-weight:400;font-family:'Liberation Sans', sans-serif;transform:scaleX(0.9458);">Column type</span>
<span class="t" style="left:179.00px;top:655.00px;font-size:7.50px;line-height:7.50px;color:#bfe9fb;font-weight:400;font-family:'Liberation Sans', sans-serif;">:</span>
<span class="t" style="left:187.40px;top:656.00px;font-size:8.20px;line-height:8.20px;color:#cdf2ff;font-weight:400;font-family:'Liberation Sans', sans-serif;">0</span>
<div style="left:190.00px;top:413.70px;width:169.30px;height:11.50px;background:#fff;border:0.8px solid #8a8a8a;border-radius:1px;"></div>
<span class="t" style="left:192.90px;top:416.00px;font-size:7.60px;line-height:7.60px;color:#111;font-weight:400;font-family:'Liberation Sans', sans-serif;transform:scaleX(0.9468);">Appliance_FD</span>
<svg style="left:351.20px;top:417.20px;" width="6.00" height="4.00" viewBox="0 0 6.00 4.00"><path d="M0.6 0.6 L2.9 2.9 L5.2 0.6" stroke="#111" stroke-width="1.1" fill="none"/></svg>
<div style="left:190.00px;top:425.10px;width:169.30px;height:37.90px;background:#fff;border:0.6px solid #b8b8b8;"></div>
<div style="left:190.60px;top:425.60px;width:168.10px;height:9.10px;background:#1f74e6;"></div>
<span class="t" style="left:193.40px;top:427.00px;font-size:7.40px;line-height:7.40px;color:#fff;font-weight:400;font-family:'Liberation Sans', sans-serif;transform:scaleX(0.9595);">Appliance_FD</span>
<span class="t" style="left:193.40px;top:436.00px;font-size:7.40px;line-height:7.40px;color:#1b1b1b;font-weight:400;font-family:'Liberation Sans', sans-serif;transform:scaleX(0.9700);">Appliance</span>
<span class="t" style="left:193.40px;top:445.00px;font-size:7.40px;line-height:7.40px;color:#1b1b1b;font-weight:400;font-family:'Liberation Sans', sans-serif;transform:scaleX(0.9700);">Welding equip.</span>
<span class="t" style="left:193.40px;top:454.00px;font-size:7.40px;line-height:7.40px;color:#1b1b1b;font-weight:400;font-family:'Liberation Sans', sans-serif;transform:scaleX(0.9700);">Welding equip. FD</span>
<div style="left:190.30px;top:478.70px;width:161.60px;height:11.50px;background:#fff;border:0.8px solid #8a8a8a;border-radius:1px;"></div>
<span class="t" style="left:193.30px;top:481.00px;font-size:7.60px;line-height:7.60px;color:#111;font-weight:400;font-family:'Liberation Sans', sans-serif;transform:scaleX(0.9700);">Next test</span>
<svg style="left:344.00px;top:482.40px;" width="6.00" height="4.00" viewBox="0 0 6.00 4.00"><path d="M0.6 0.6 L2.9 2.9 L5.2 0.6" stroke="#111" stroke-width="1.1" fill="none"/></svg>
<div style="left:190.00px;top:490.10px;width:161.80px;height:180.20px;background:#fff;border:0.6px solid #c8c8c8;border-bottom:none;"></div>
<div style="left:190.60px;top:490.50px;width:152.80px;height:9.20px;background:#1f74e6;"></div>
<div style="left:343.40px;top:490.60px;width:8.00px;height:179.20px;background:#efefef;"></div>
<div style="left:343.80px;top:497.40px;width:7.20px;height:126.30px;background:#c1c1c1;"></div>
<svg style="left:345.20px;top:492.00px;" width="5.00" height="4.00" viewBox="0 0 5.00 4.00"><path d="M0.4 3.2 H4.2 L2.3 0.8 Z" fill="#a0a0a0"/></svg>
<svg style="left:345.20px;top:663.20px;" width="5.00" height="4.00" viewBox="0 0 5.00 4.00"><path d="M0.4 0.6 H4.2 L2.3 3 Z" fill="#555"/></svg>
<span class="t" style="left:194.00px;top:492.00px;font-size:7.30px;line-height:7.30px;color:#fff;font-weight:400;font-family:'Liberation Sans', sans-serif;transform:scaleX(0.9650);">Appliance ID</span>
<span class="t" style="left:194.00px;top:501.00px;font-size:7.30px;line-height:7.30px;color:#1b1b1b;font-weight:400;font-family:'Liberation Sans', sans-serif;transform:scaleX(0.9650);">Name</span>
<span class="t" style="left:194.00px;top:510.00px;font-size:7.30px;line-height:7.30px;color:#1b1b1b;font-weight:400;font-family:'Liberation Sans', sans-serif;transform:scaleX(0.9650);">Equipment User</span>
<span class="t" style="left:194.00px;top:518.00px;font-size:7.30px;line-height:7.30px;color:#1b1b1b;font-weight:400;font-family:'Liberation Sans', sans-serif;transform:scaleX(0.9650);">Location (Room)</span>
<span class="t" style="left:194.00px;top:527.00px;font-size:7.30px;line-height:7.30px;color:#1b1b1b;font-weight:400;font-family:'Liberation Sans', sans-serif;transform:scaleX(0.9650);">Inventary No.</span>
<span class="t" style="left:194.00px;top:536.00px;font-size:7.30px;line-height:7.30px;color:#1b1b1b;font-weight:400;font-family:'Liberation Sans', sans-serif;transform:scaleX(0.9650);">Test date</span>
<span class="t" style="left:194.00px;top:545.00px;font-size:7.30px;line-height:7.30px;color:#1b1b1b;font-weight:400;font-family:'Liberation Sans', sans-serif;transform:scaleX(0.9650);">Retest period (in months)</span>
<span class="t" style="left:194.00px;top:554.00px;font-size:7.30px;line-height:7.30px;color:#1b1b1b;font-weight:400;font-family:'Liberation Sans', sans-serif;transform:scaleX(0.9650);">Next test</span>
<span class="t" style="left:194.00px;top:563.00px;font-size:7.30px;line-height:7.30px;color:#1b1b1b;font-weight:400;font-family:'Liberation Sans', sans-serif;transform:scaleX(0.9650);">Group</span>
<span class="t" style="left:194.00px;top:572.00px;font-size:7.30px;line-height:7.30px;color:#1b1b1b;font-weight:400;font-family:'Liberation Sans', sans-serif;transform:scaleX(0.9650);">Producer / Make</span>
<span class="t" style="left:194.00px;top:581.00px;font-size:7.30px;line-height:7.30px;color:#1b1b1b;font-weight:400;font-family:'Liberation Sans', sans-serif;transform:scaleX(0.9650);">Year of production</span>
<span class="t" style="left:194.00px;top:590.00px;font-size:7.30px;line-height:7.30px;color:#1b1b1b;font-weight:400;font-family:'Liberation Sans', sans-serif;transform:scaleX(0.9650);">Nominal voltage</span>
<span class="t" style="left:194.00px;top:599.00px;font-size:7.30px;line-height:7.30px;color:#1b1b1b;font-weight:400;font-family:'Liberation Sans', sans-serif;transform:scaleX(0.9650);">Nominal frequency</span>
<span class="t" style="left:194.00px;top:608.00px;font-size:7.30px;line-height:7.30px;color:#1b1b1b;font-weight:400;font-family:'Liberation Sans', sans-serif;transform:scaleX(0.9650);">Nominal power</span>
<span class="t" style="left:194.00px;top:617.00px;font-size:7.30px;line-height:7.30px;color:#1b1b1b;font-weight:400;font-family:'Liberation Sans', sans-serif;transform:scaleX(0.9650);">Fuse rating</span>
<span class="t" style="left:194.00px;top:626.00px;font-size:7.30px;line-height:7.30px;color:#1b1b1b;font-weight:400;font-family:'Liberation Sans', sans-serif;transform:scaleX(0.9650);">Current</span>
<span class="t" style="left:194.00px;top:635.00px;font-size:7.30px;line-height:7.30px;color:#1b1b1b;font-weight:400;font-family:'Liberation Sans', sans-serif;transform:scaleX(0.9650);">cos fi</span>
<span class="t" style="left:194.00px;top:644.00px;font-size:7.30px;line-height:7.30px;color:#1b1b1b;font-weight:400;font-family:'Liberation Sans', sans-serif;transform:scaleX(0.9650);">No. of phases</span>
<span class="t" style="left:194.00px;top:653.00px;font-size:7.30px;line-height:7.30px;color:#1b1b1b;font-weight:400;font-family:'Liberation Sans', sans-serif;transform:scaleX(0.9650);">Inspector</span>
<span class="t" style="left:194.00px;top:662.00px;font-size:7.30px;line-height:7.30px;color:#1b1b1b;font-weight:400;font-family:'Liberation Sans', sans-serif;transform:scaleX(0.9650);">Test standard</span>
<svg style="left:0.00px;top:0.00px;pointer-events:none;" width="875.00" height="677.00" viewBox="0 0 875.00 677.00"><path d="M240.60 496.50 H376.40 V131.20 H599.40" stroke="#d61f28" stroke-width="1.3" fill="none"/><path d="M240.60 496.50 H343.4" stroke="#74408a" stroke-width="1.3" fill="none"/><path d="M351.8 496.50 H366.3" stroke="#74408a" stroke-width="1.3" fill="none"/><path d="M604.40 131.20 L598.20 128.20 L599.00 131.20 L598.20 134.20 Z" fill="#e0101c" stroke="#c0101a" stroke-width="0.4"/><path d="M215.40 503.40 H389.00 V142.20 H599.60" stroke="#d61f28" stroke-width="1.3" fill="none"/><path d="M351.8 503.40 H366.3" stroke="#74408a" stroke-width="1.3" fill="none"/><path d="M604.60 142.20 L598.40 139.20 L599.20 142.20 L598.40 145.20 Z" fill="#e0101c" stroke="#c0101a" stroke-width="0.4"/><path d="M238.30 529.80 H403.40 V168.40 H601.90" stroke="#d61f28" stroke-width="1.3" fill="none"/><path d="M351.8 529.80 H366.3" stroke="#74408a" stroke-width="1.3" fill="none"/><path d="M606.90 168.40 L600.70 165.40 L601.50 168.40 L600.70 171.40 Z" fill="#e0101c" stroke="#c0101a" stroke-width="0.4"/><path d="M226.90 540.60 H417.70 V179.40 H601.90" stroke="#d61f28" stroke-width="1.3" fill="none"/><path d="M351.8 540.60 H366.3" stroke="#74408a" stroke-width="1.3" fill="none"/><path d="M606.90 179.40 L600.70 176.40 L601.50 179.40 L600.70 182.40 Z" fill="#e0101c" stroke="#c0101a" stroke-width="0.4"/><path d="M277.80 548.20 H435.00 V186.90 H601.90" stroke="#d61f28" stroke-width="1.3" fill="none"/><path d="M351.8 548.20 H366.3" stroke="#74408a" stroke-width="1.3" fill="none"/><path d="M606.90 186.90 L600.70 183.90 L601.50 186.90 L600.70 189.90 Z" fill="#e0101c" stroke="#c0101a" stroke-width="0.4"/><path d="M229.10 557.00 H460.80 V199.60 H601.90" stroke="#d61f28" stroke-width="1.3" fill="none"/><path d="M351.8 557.00 H366.3" stroke="#74408a" stroke-width="1.3" fill="none"/><path d="M606.90 199.60 L600.70 196.60 L601.50 199.60 L600.70 202.60 Z" fill="#e0101c" stroke="#c0101a" stroke-width="0.4"/><path d="M271.40 577.70 H478.90 V216.60 H601.90" stroke="#d61f28" stroke-width="1.3" fill="none"/><path d="M351.8 577.70 H366.3" stroke="#74408a" stroke-width="1.3" fill="none"/><path d="M606.90 216.60 L600.70 213.60 L601.50 216.60 L600.70 219.60 Z" fill="#e0101c" stroke="#c0101a" stroke-width="0.4"/><rect x="29.0" y="164.3" width="38.1" height="194.0" stroke="#d0343e" stroke-width="1.7" fill="none"/><path d="M190.0 429.8 H115.5 V248.7 H73" stroke="#d61f28" stroke-width="1.3" fill="none"/><path d="M190.0 429.8 H115.5 V405.5" stroke="#74408a" stroke-width="1.3" fill="none"/><path d="M115.5 405.5 V381.4" stroke="#5a1a22" stroke-width="1.3" fill="none"/><path d="M69.4 248.7 L75.8 245.3 L74.6 248.7 L75.8 252.1 Z" fill="#e0101c" stroke="#c0101a" stroke-width="0.4"/></svg>
</div></body></html>
